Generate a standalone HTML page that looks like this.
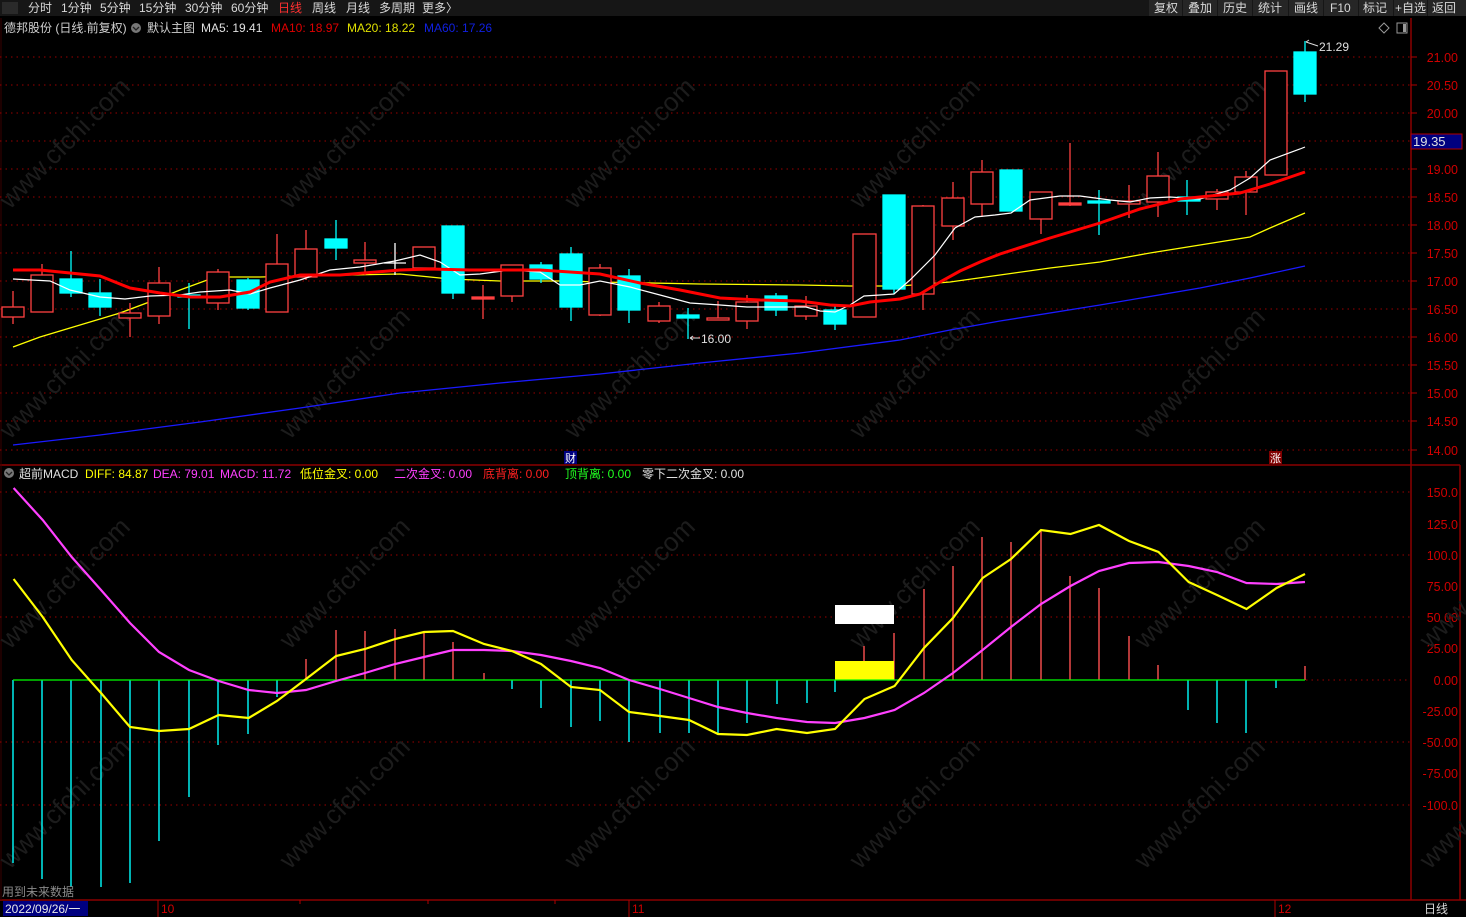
<!DOCTYPE html>
<html><head><meta charset="utf-8"><style>
html,body{margin:0;padding:0;background:#000;width:1466px;height:917px;overflow:hidden}
svg{display:block}
text{font-family:"Liberation Sans","Noto Sans CJK SC",sans-serif}
</style></head><body>
<svg width="1466" height="917" viewBox="0 0 1466 917" xmlns="http://www.w3.org/2000/svg">
<rect width="1466" height="917" fill="#000"/>
<rect x="0" y="0" width="1466" height="16" fill="#161616"/>
<rect x="2" y="2" width="16" height="12" fill="#2a2a2a"/>
<g font-size="12" fill="#d8d8d8">
<text x="28" y="12">分时</text><text x="61" y="12">1分钟</text><text x="100" y="12">5分钟</text><text x="139" y="12">15分钟</text><text x="185" y="12">30分钟</text><text x="231" y="12">60分钟</text><text x="278" y="12" fill="#ff3030">日线</text><text x="312" y="12">周线</text><text x="346" y="12">月线</text><text x="379" y="12">多周期</text><text x="422" y="12">更多〉</text>
</g>
<g fill="#262626">
<rect x="1149" y="0" width="33" height="16"/><rect x="1183" y="0" width="34" height="16"/><rect x="1218" y="0" width="34" height="16"/><rect x="1253" y="0" width="35" height="16"/><rect x="1289" y="0" width="34" height="16"/><rect x="1324" y="0" width="34" height="16"/><rect x="1359" y="0" width="34" height="16"/><rect x="1394" y="0" width="33" height="16"/><rect x="1428" y="0" width="38" height="16"/>
</g>
<g font-size="12" fill="#d8d8d8">
<text x="1154" y="12">复权</text><text x="1188" y="12">叠加</text><text x="1223" y="12">历史</text><text x="1258" y="12">统计</text><text x="1294" y="12">画线</text><text x="1330" y="12">F10</text><text x="1363" y="12">标记</text><text x="1395" y="12">+自选</text><text x="1432" y="12">返回</text>
</g>
<g font-size="12">
<text x="4" y="32" fill="#d0d0d0">德邦股份 (日线.前复权)</text>
<circle cx="136" cy="28" r="5" fill="#777"/><path d="M133 27l3 3 3-3" stroke="#222" fill="none" stroke-width="1.3"/>
<text x="147" y="32" fill="#d0d0d0">默认主图</text>
<text x="201" y="32" fill="#e0e0e0">MA5: 19.41</text>
<text x="271" y="32" fill="#e00000">MA10: 18.97</text>
<text x="347" y="32" fill="#e0e000">MA20: 18.22</text>
<text x="424" y="32" fill="#1020e0">MA60: 17.26</text>
</g>
<path d="M1384 23l5 5-5 5-5-5z" stroke="#999" fill="none"/>
<rect x="1397" y="23" width="10" height="10" stroke="#999" fill="none"/><rect x="1403" y="24" width="3" height="8" fill="#999"/>
<line x1="1411" y1="18" x2="1411" y2="900" stroke="#8b0000" stroke-width="1.5"/>
<line x1="1460" y1="465" x2="1460" y2="900" stroke="#8b0000" stroke-width="1.5"/>
<line x1="0" y1="465" x2="1460" y2="465" stroke="#8b0000" stroke-width="1.5"/>
<line x1="0" y1="900" x2="1466" y2="900" stroke="#8b0000" stroke-width="1.5"/>
<line x1="1" y1="18" x2="1" y2="900" stroke="#3a0000"/>
<g stroke="#9a0000" stroke-dasharray="1.5,4" stroke-width="1">
<line x1="0" y1="57" x2="1410" y2="57"/><line x1="0" y1="85" x2="1410" y2="85"/><line x1="0" y1="113" x2="1410" y2="113"/><line x1="0" y1="141" x2="1410" y2="141"/><line x1="0" y1="169" x2="1410" y2="169"/><line x1="0" y1="197" x2="1410" y2="197"/><line x1="0" y1="225" x2="1410" y2="225"/><line x1="0" y1="253" x2="1410" y2="253"/><line x1="0" y1="281" x2="1410" y2="281"/><line x1="0" y1="309" x2="1410" y2="309"/><line x1="0" y1="337" x2="1410" y2="337"/><line x1="0" y1="365" x2="1410" y2="365"/><line x1="0" y1="393" x2="1410" y2="393"/><line x1="0" y1="421" x2="1410" y2="421"/><line x1="0" y1="450" x2="1410" y2="450"/>
<line x1="0" y1="492" x2="1410" y2="492"/><line x1="0" y1="555" x2="1410" y2="555"/><line x1="0" y1="617" x2="1410" y2="617"/><line x1="1306" y1="680" x2="1410" y2="680"/><line x1="0" y1="742" x2="1410" y2="742"/><line x1="0" y1="805" x2="1410" y2="805"/>
</g>
<g fill="#d00000" font-size="12.5" text-anchor="end">
<text x="1458" y="62">21.00</text><text x="1458" y="90">20.50</text><text x="1458" y="118">20.00</text><text x="1458" y="174">19.00</text><text x="1458" y="202">18.50</text><text x="1458" y="230">18.00</text><text x="1458" y="258">17.50</text><text x="1458" y="286">17.00</text><text x="1458" y="314">16.50</text><text x="1458" y="342">16.00</text><text x="1458" y="370">15.50</text><text x="1458" y="398">15.00</text><text x="1458" y="426">14.50</text><text x="1458" y="455">14.00</text>
<text x="1458" y="497">150.0</text><text x="1458" y="529">125.0</text><text x="1458" y="560">100.0</text><text x="1458" y="591">75.00</text><text x="1458" y="622">50.00</text><text x="1458" y="653">25.00</text><text x="1458" y="685">0.00</text><text x="1458" y="716">-25.00</text><text x="1458" y="747">-50.00</text><text x="1458" y="778">-75.00</text><text x="1458" y="810">-100.0</text>
</g>
<g stroke="#b00000"><line x1="1411" y1="57" x2="1417" y2="57"/><line x1="1411" y1="85" x2="1417" y2="85"/><line x1="1411" y1="113" x2="1417" y2="113"/><line x1="1411" y1="169" x2="1417" y2="169"/><line x1="1411" y1="197" x2="1417" y2="197"/><line x1="1411" y1="225" x2="1417" y2="225"/><line x1="1411" y1="253" x2="1417" y2="253"/><line x1="1411" y1="281" x2="1417" y2="281"/><line x1="1411" y1="309" x2="1417" y2="309"/><line x1="1411" y1="337" x2="1417" y2="337"/><line x1="1411" y1="365" x2="1417" y2="365"/><line x1="1411" y1="393" x2="1417" y2="393"/><line x1="1411" y1="421" x2="1417" y2="421"/><line x1="1411" y1="450" x2="1417" y2="450"/></g>
<rect x="1411" y="134" width="51" height="15" fill="#000080" stroke="#b00000"/>
<text x="1413" y="146" font-size="13" fill="#e0e0e0">19.35</text>
<g fill="#1c1c1c" font-size="26">
<text transform="translate(10,210) rotate(-45)">www.cfchi.com</text><text transform="translate(290,210) rotate(-45)">www.cfchi.com</text><text transform="translate(575,210) rotate(-45)">www.cfchi.com</text><text transform="translate(860,210) rotate(-45)">www.cfchi.com</text><text transform="translate(1145,210) rotate(-45)">www.cfchi.com</text>
<text transform="translate(10,440) rotate(-45)">www.cfchi.com</text><text transform="translate(290,440) rotate(-45)">www.cfchi.com</text><text transform="translate(575,440) rotate(-45)">www.cfchi.com</text><text transform="translate(860,440) rotate(-45)">www.cfchi.com</text><text transform="translate(1145,440) rotate(-45)">www.cfchi.com</text>
<text transform="translate(10,650) rotate(-45)">www.cfchi.com</text><text transform="translate(290,650) rotate(-45)">www.cfchi.com</text><text transform="translate(575,650) rotate(-45)">www.cfchi.com</text><text transform="translate(860,650) rotate(-45)">www.cfchi.com</text><text transform="translate(1145,650) rotate(-45)">www.cfchi.com</text><text transform="translate(1430,650) rotate(-45)">www.cfchi.com</text>
<text transform="translate(10,870) rotate(-45)">www.cfchi.com</text><text transform="translate(290,870) rotate(-45)">www.cfchi.com</text><text transform="translate(575,870) rotate(-45)">www.cfchi.com</text><text transform="translate(860,870) rotate(-45)">www.cfchi.com</text><text transform="translate(1145,870) rotate(-45)">www.cfchi.com</text><text transform="translate(1430,870) rotate(-45)">www.cfchi.com</text>
</g>
<polyline fill="none" stroke="#1a1aff" stroke-width="1.3" points="13,445 100,435 200,422 300,408 400,393 500,383 600,374 700,363 800,353 900,340 950,330 1000,321 1100,305 1200,288 1250,278 1305,266"/>
<polyline fill="none" stroke="#ffff00" stroke-width="1.3" points="13,347 40,337 80,325 120,313 160,298 180,290 210,279 230,277 260,277 300,276 400,274 450,279 500,281 560,281 600,282 700,284 800,285 850,286 900,286 950,282 1000,275 1050,268 1100,262 1150,253 1200,245 1250,237 1270,228 1305,213"/>
<g stroke-width="1.3">
<g stroke="#ff4040" fill="#000">
<line x1="13" y1="291" x2="13" y2="324"/><rect x="2" y="307" width="22" height="10"/>
<line x1="42" y1="264" x2="42" y2="312"/><rect x="31" y="275" width="22" height="37"/>
<line x1="130" y1="303" x2="130" y2="337"/><rect x="119" y="313" width="22" height="5"/>
<line x1="159" y1="267" x2="159" y2="324"/><rect x="148" y="283" width="22" height="33"/>
<line x1="218" y1="269" x2="218" y2="310"/><rect x="207" y="272" width="22" height="31"/>
<line x1="277" y1="234" x2="277" y2="312"/><rect x="266" y="264" width="22" height="48"/>
<line x1="306" y1="230" x2="306" y2="280"/><rect x="295" y="249" width="22" height="28"/>
<line x1="365" y1="242" x2="365" y2="275"/><rect x="354" y="260" width="22" height="3"/>
<line x1="424" y1="247" x2="424" y2="270"/><rect x="413" y="247" width="22" height="21"/>
<line x1="483" y1="285" x2="483" y2="319"/><rect x="472" y="297" width="22" height="2" fill="#ff4040"/>
<line x1="512" y1="265" x2="512" y2="302"/><rect x="501" y="265" width="22" height="31"/>
<line x1="600" y1="264" x2="600" y2="316"/><rect x="589" y="268" width="22" height="47"/>
<line x1="659" y1="302" x2="659" y2="323"/><rect x="648" y="306" width="22" height="15"/>
<line x1="718" y1="301" x2="718" y2="320"/><rect x="707" y="318" width="22" height="2"/>
<line x1="747" y1="295" x2="747" y2="329"/><rect x="736" y="302" width="22" height="19"/>
<line x1="806" y1="296" x2="806" y2="320"/><rect x="795" y="306" width="22" height="10"/>
<rect x="853" y="234" width="23" height="83"/>
<line x1="923" y1="205" x2="923" y2="310"/><rect x="912" y="206" width="22" height="88"/>
<line x1="953" y1="182" x2="953" y2="240"/><rect x="942" y="198" width="22" height="28"/>
<line x1="982" y1="160" x2="982" y2="217"/><rect x="971" y="172" width="22" height="32"/>
<line x1="1041" y1="192" x2="1041" y2="234"/><rect x="1030" y="192" width="22" height="27"/>
<line x1="1070" y1="143" x2="1070" y2="206"/><rect x="1059" y="203" width="22" height="2" fill="#ff4040"/>
<line x1="1129" y1="185" x2="1129" y2="218"/><rect x="1118" y="201" width="22" height="3"/>
<line x1="1158" y1="152" x2="1158" y2="217"/><rect x="1147" y="176" width="22" height="26"/>
<line x1="1217" y1="189" x2="1217" y2="210"/><rect x="1206" y="192" width="22" height="7"/>
<line x1="1246" y1="171" x2="1246" y2="215"/><rect x="1235" y="177" width="22" height="15"/>
<rect x="1265" y="71" width="22" height="104"/>
</g>
<g stroke="#00ffff" fill="#00ffff">
<line x1="71" y1="251" x2="71" y2="297"/><rect x="60" y="279" width="22" height="14"/>
<line x1="100" y1="279" x2="100" y2="316"/><rect x="89" y="293" width="22" height="14"/>
<line x1="189" y1="283" x2="189" y2="329"/><rect x="178" y="295" width="22" height="2"/>
<line x1="248" y1="278" x2="248" y2="310"/><rect x="237" y="280" width="22" height="28"/>
<line x1="336" y1="220" x2="336" y2="260"/><rect x="325" y="239" width="22" height="9"/>
<line x1="453" y1="226" x2="453" y2="299"/><rect x="442" y="226" width="22" height="67"/>
<line x1="541" y1="262" x2="541" y2="283"/><rect x="530" y="265" width="22" height="14"/>
<line x1="571" y1="247" x2="571" y2="321"/><rect x="560" y="254" width="22" height="53"/>
<line x1="629" y1="269" x2="629" y2="323"/><rect x="618" y="276" width="22" height="34"/>
<line x1="688" y1="308" x2="688" y2="339"/><rect x="677" y="315" width="22" height="3"/>
<line x1="776" y1="293" x2="776" y2="316"/><rect x="765" y="296" width="22" height="14"/>
<line x1="835" y1="306" x2="835" y2="330"/><rect x="824" y="310" width="22" height="14"/>
<line x1="894" y1="195" x2="894" y2="294"/><rect x="883" y="195" width="22" height="94"/>
<rect x="1000" y="170" width="22" height="41"/>
<line x1="1099" y1="190" x2="1099" y2="235"/><rect x="1088" y="201" width="22" height="2"/>
<line x1="1187" y1="180" x2="1187" y2="215"/><rect x="1178" y="197" width="22" height="4"/>
<line x1="1305" y1="41" x2="1305" y2="102"/><rect x="1294" y="52" width="22" height="42"/>
</g>
<g stroke="#fff"><line x1="395" y1="243" x2="395" y2="275"/><line x1="384" y1="263" x2="406" y2="263"/></g>
</g>
<polyline fill="none" stroke="#ffffff" stroke-width="1.2" points="13,279 50,281 70,290 100,297 125,299 150,296 180,295 200,292 230,290 250,294 270,288 300,280 330,270 360,267 395,261 420,255 440,262 460,275 480,274 510,270 540,272 560,285 580,285 600,281 630,287 660,295 690,303 720,305 747,307 776,307 806,307 820,311 835,312 850,305 864,296 880,295 894,294 910,280 935,255 955,228 975,217 995,215 1011,213 1030,200 1060,196 1080,196 1110,200 1130,202 1150,198 1170,197 1200,199 1230,190 1250,178 1270,160 1300,149 1305,147"/>
<polyline fill="none" stroke="#ff0000" stroke-width="3" points="13,270 40,270 60,272 100,276 130,288 160,293 190,297 220,297 250,292 270,282 300,275 340,275 400,270 430,269 470,270 500,270 540,270 570,272 600,274 640,283 680,290 720,298 760,300 800,301 830,305 850,306 870,302 900,299 920,294 940,282 960,271 980,262 1000,254 1050,238 1100,223 1140,209 1180,199 1210,196 1240,193 1270,184 1305,172"/>
<g font-size="12" fill="#e0e0e0">
<text x="701" y="343">16.00</text><path d="M690 338h10M690 338l3-2M690 338l3 2" stroke="#ddd" fill="none"/>
<text x="1319" y="51">21.29</text><path d="M1306 42l12 4M1306 42l3-2" stroke="#ddd" fill="none"/>
</g>
<rect x="564" y="451" width="13" height="13" fill="#000080"/><text x="565" y="462" font-size="11" fill="#fff">财</text>
<rect x="1269" y="451" width="13" height="13" fill="#800000"/><text x="1270" y="462" font-size="11" fill="#fff">涨</text>
<g font-size="12">
<circle cx="9" cy="473" r="5" fill="#777"/><path d="M6 472l3 3 3-3" stroke="#222" fill="none" stroke-width="1.3"/>
<text x="19" y="478" fill="#e0e0e0">超前MACD</text>
<text x="85" y="478" fill="#ffff00">DIFF: 84.87</text>
<text x="153" y="478" fill="#ff40ff">DEA: 79.01</text>
<text x="220" y="478" fill="#ff40ff">MACD: 11.72</text>
<text x="300" y="478" fill="#ffff00">低位金叉: 0.00</text>
<text x="394" y="478" fill="#ff40ff">二次金叉: 0.00</text>
<text x="483" y="478" fill="#ff2020">底背离: 0.00</text>
<text x="565" y="478" fill="#20ff20">顶背离: 0.00</text>
<text x="642" y="478" fill="#e0e0e0">零下二次金叉: 0.00</text>
</g>
<g stroke="#00ffff" stroke-width="1.4">
<line x1="13" y1="680" x2="13" y2="863"/><line x1="42" y1="680" x2="42" y2="879"/><line x1="71" y1="680" x2="71" y2="887"/><line x1="101" y1="680" x2="101" y2="887"/><line x1="130" y1="680" x2="130" y2="883"/><line x1="159" y1="680" x2="159" y2="841"/><line x1="189" y1="680" x2="189" y2="797"/><line x1="218" y1="680" x2="218" y2="745"/><line x1="248" y1="680" x2="248" y2="734"/><line x1="277" y1="680" x2="277" y2="697"/>
<line x1="512" y1="680" x2="512" y2="689"/><line x1="541" y1="680" x2="541" y2="708"/><line x1="571" y1="680" x2="571" y2="727"/><line x1="600" y1="680" x2="600" y2="721"/><line x1="629" y1="680" x2="629" y2="742"/><line x1="660" y1="680" x2="660" y2="733"/><line x1="689" y1="680" x2="689" y2="733"/><line x1="718" y1="680" x2="718" y2="733"/><line x1="747" y1="680" x2="747" y2="723"/><line x1="777" y1="680" x2="777" y2="704"/><line x1="807" y1="680" x2="807" y2="703"/><line x1="835" y1="680" x2="835" y2="692"/>
<line x1="1188" y1="680" x2="1188" y2="710"/><line x1="1217" y1="680" x2="1217" y2="723"/><line x1="1246" y1="680" x2="1246" y2="733"/><line x1="1276" y1="680" x2="1276" y2="688"/>
</g>
<g stroke="#ff5050" stroke-width="1.4">
<line x1="306" y1="680" x2="306" y2="659"/><line x1="336" y1="680" x2="336" y2="630"/><line x1="365" y1="680" x2="365" y2="631"/><line x1="395" y1="680" x2="395" y2="629"/><line x1="424" y1="680" x2="424" y2="632"/><line x1="453" y1="680" x2="453" y2="642"/><line x1="484" y1="680" x2="484" y2="673"/>
<line x1="864" y1="680" x2="864" y2="646"/><line x1="894" y1="680" x2="894" y2="633"/><line x1="924" y1="680" x2="924" y2="589"/><line x1="953" y1="680" x2="953" y2="566"/><line x1="982" y1="680" x2="982" y2="537"/><line x1="1011" y1="680" x2="1011" y2="542"/><line x1="1041" y1="680" x2="1041" y2="531"/><line x1="1070" y1="680" x2="1070" y2="576"/><line x1="1099" y1="680" x2="1099" y2="588"/><line x1="1129" y1="680" x2="1129" y2="636"/><line x1="1158" y1="680" x2="1158" y2="665"/><line x1="1305" y1="680" x2="1305" y2="666"/>
</g>
<rect x="835" y="661" width="59" height="19" fill="#ffff00"/>
<rect x="835" y="605" width="59" height="19" fill="#ffffff"/>
<line x1="13" y1="680" x2="1305" y2="680" stroke="#00ff00" stroke-width="1.3"/>
<polyline fill="none" stroke="#ff40ff" stroke-width="2.2" points="13.6,488 42.7,520 71.7,557 101,590 130,623 159,652 189,670 218.6,681 248.7,690 277,693 306,690 336,681 365,673 395,664 424,657 453,650 484,650 512,651 541,655 571,661 600,668 629,680 660,689 689,698 718,707 747,713 776.6,718 807,722 835,723 864.5,718 894.6,710 924,693 953,673 982.6,650 1011,627 1041,604 1070.5,586 1099,571 1129,563 1158.5,562 1188.6,566 1217,572 1246.5,583 1276.6,584 1305,582"/>
<polyline fill="none" stroke="#ffff00" stroke-width="2.2" points="13.6,579 42.7,617 71.7,660 101,693 130,727 159,731 189,729 218.6,715 248.7,718 277,701 306,679 336,656 365,649 395,639 424,632 453,631 484,644 512,651 541,664 571,687 600,690 629,712 660,716 689,720 718,734 747,735 776.6,729 807,733 835,729 864.5,699 894.6,686 924,648 953,618 982.6,578 1011,559 1041,530 1070.5,534 1099,525 1129,541 1158.5,552 1188.6,582 1217,595 1246.5,609 1276.6,588 1305,574"/>
<text x="2" y="896" font-size="12" fill="#8a8a8a">用到未来数据</text>
<rect x="3" y="901" width="85" height="15" fill="#000080"/>
<text x="5" y="913" font-size="12" fill="#e8e8e8">2022/09/26/一</text>
<g stroke="#b00000"><line x1="158" y1="900" x2="158" y2="917"/><line x1="629" y1="900" x2="629" y2="917"/><line x1="1275" y1="900" x2="1275" y2="917"/><line x1="300" y1="900" x2="300" y2="904"/><line x1="428" y1="900" x2="428" y2="904"/><line x1="555" y1="900" x2="555" y2="904"/></g>
<g font-size="12" fill="#d00000"><text x="161" y="913">10</text><text x="632" y="913">11</text><text x="1278" y="913">12</text></g>
<text x="1424" y="913" font-size="12" fill="#d8d8d8">日线</text>
</svg>
</body></html>
